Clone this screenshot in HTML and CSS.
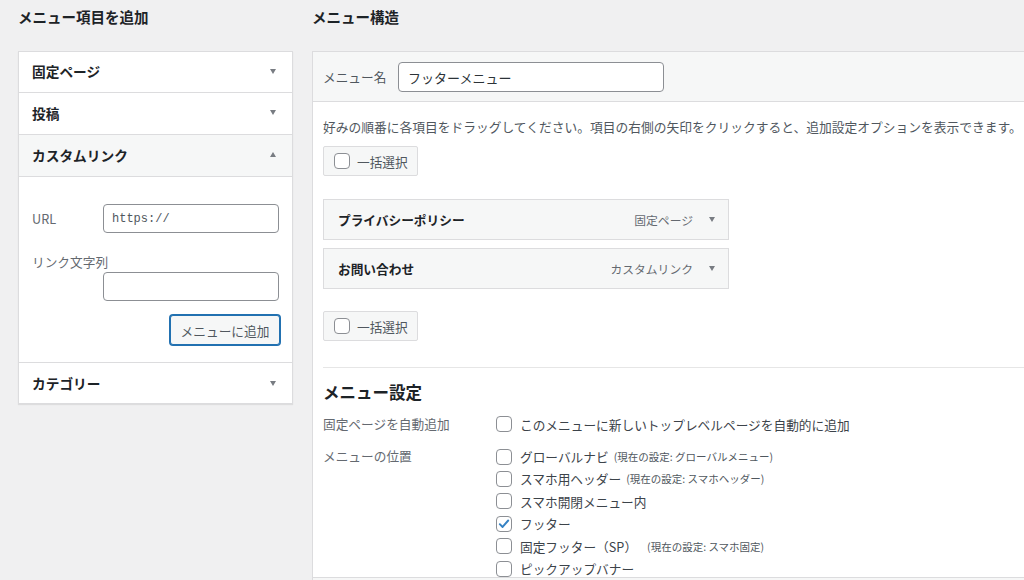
FILE: index.html
```html
<!DOCTYPE html>
<html lang="ja">
<head>
<meta charset="utf-8">
<title>メニュー</title>
<link rel="stylesheet" href="styles.css">
</head>
<body>
<div class="wrap">
  <div class="col-left">
    <h2 class="col-title">メニュー項目を追加</h2>
    <div class="acc">
      <div class="acc-head first"><span>固定ページ</span><i class="tri down"></i></div>
      <div class="acc-head"><span>投稿</span><i class="tri down"></i></div>
      <div class="acc-head open"><span>カスタムリンク</span><i class="tri up"></i></div>
      <div class="acc-body">
        <div class="field-row">
          <label class="fl">URL</label>
          <input class="txt mono" type="text" value="https://">
        </div>
        <div class="fl fl-block">リンク文字列</div>
        <div class="field-row">
          <span class="fl"></span>
          <input class="txt" type="text">
        </div>
        <div class="btn-row"><button class="btn">メニューに追加</button></div>
      </div>
      <div class="acc-head last"><span>カテゴリー</span><i class="tri down"></i></div>
    </div>
  </div>

  <div class="col-right">
    <h2 class="col-title">メニュー構造</h2>
    <div class="menu-panel">
      <div class="mp-head">
        <label class="mp-label">メニュー名</label>
        <input class="txt name" type="text" value="フッターメニュー">
      </div>
      <div class="mp-body">
        <p class="desc">好みの順番に各項目をドラッグしてください。項目の右側の矢印をクリックすると、追加設定オプションを表示できます。</p>
        <div class="bulk"><span class="cb"></span><span>一括選択</span></div>
        <div class="items">
          <div class="item"><span class="item-title">プライバシーポリシー</span><span class="item-type">固定ページ</span><i class="tri down"></i></div>
          <div class="item"><span class="item-title">お問い合わせ</span><span class="item-type">カスタムリンク</span><i class="tri down"></i></div>
        </div>
        <div class="bulk bulk2"><span class="cb"></span><span>一括選択</span></div>

        <div class="settings">
          <h3 class="set-title">メニュー設定</h3>
          <div class="set-row">
            <div class="set-label">固定ページを自動追加</div>
            <div class="set-opts">
              <div class="opt"><span class="cb"></span><span>このメニューに新しいトップレベルページを自動的に追加</span></div>
            </div>
          </div>
          <div class="set-row">
            <div class="set-label">メニューの位置</div>
            <div class="set-opts">
              <div class="opt"><span class="cb"></span><span>グローバルナビ</span><small class="cur">(現在の設定: グローバルメニュー)</small></div>
              <div class="opt"><span class="cb"></span><span>スマホ用ヘッダー</span><small class="cur">(現在の設定: スマホヘッダー)</small></div>
              <div class="opt"><span class="cb"></span><span>スマホ開閉メニュー内</span></div>
              <div class="opt"><span class="cb checked"><svg viewBox="0 0 16 16" width="14" height="14"><path d="M3.2 8.2 L6.4 11.4 L12.8 4" fill="none" stroke="#3582c4" stroke-width="2.2" stroke-linecap="round" stroke-linejoin="round"/></svg></span><span>フッター</span></div>
              <div class="opt"><span class="cb"></span><span>固定フッター（SP）</span><small class="cur cur2">(現在の設定: スマホ固定)</small></div>
              <div class="opt"><span class="cb"></span><span>ピックアップバナー</span></div>
            </div>
          </div>
        </div>
      </div>
      <div class="mp-foot"></div>
    </div>
  </div>
</div>
</body>
</html>
```

FILE: styles.css
```css
html, body {
  margin: 0;
  padding: 0;
  background: #f0f0f1;
  overflow: hidden;
  height: 580px;
}
body {
  font-family: "Noto Sans CJK JP", "Noto Sans", sans-serif;
  color: #3c434a;
  font-size: 12.7px;
}
.wrap {
  display: flex;
  align-items: flex-start;
  padding-left: 18px;
}
.col-left {
  width: 275px;
  flex: none;
}
.col-right {
  width: 760px;
  flex: none;
  margin-left: 19px;
}
.col-title {
  margin: 0;
  padding-top: 7px;
  height: 44px;
  line-height: 20px;
  font-size: 14.5px;
  font-weight: 700;
  color: #1d2327;
}

/* accordion */
.acc {
  background: #fff;
  border: 1px solid #dcdcde;
  box-shadow: 0 1px 1px rgba(0,0,0,.08);
}
.acc-head {
  height: 42px;
  box-sizing: border-box;
  border-bottom: 1px solid #dcdcde;
  display: flex;
  align-items: center;
  justify-content: space-between;
  padding: 0 16px 2px 13px;
  font-size: 13.7px;
  font-weight: 700;
  color: #1d2327;
}
.acc-head.first { height: 41px; }
.acc-head.open { background: #f6f7f7; }
.acc-head.last { border-bottom: 0; height: 40px; padding-bottom: 0; }
.tri {
  display: block;
  width: 0;
  height: 0;
  border-left: 3.5px solid transparent;
  border-right: 3.5px solid transparent;
}
.tri.down { border-top: 5px solid #787c82; }
.tri.up { border-bottom: 5px solid #787c82; }

.acc-body {
  border-bottom: 1px solid #dcdcde;
  padding: 27px 13px 17px 13px;
}
.field-row {
  display: flex;
  align-items: center;
}
.fl {
  width: 71px;
  flex: none;
  color: #646970;
  font-size: 12.7px;
  line-height: 20px;
}
.fl-block {
  width: auto;
  margin-top: 19px;
}
.txt {
  box-sizing: border-box;
  height: 29px;
  border: 1px solid #8c8f94;
  border-radius: 4px;
  background: #fff;
  padding: 0 8px;
  font-family: "Noto Sans CJK JP", sans-serif;
  font-size: 13px;
  color: #2c3338;
  width: 177px;
  margin: 0;
}
.txt.mono {
  font-family: "Liberation Mono", monospace;
  font-size: 12px;
  color: #50575e;
}
.btn-row {
  display: flex;
  justify-content: flex-end;
  margin-top: 14px;
}
.btn {
  height: 30px;
  width: 110px;
  box-sizing: border-box;
  border: 1px solid #2271b1;
  box-shadow: 0 0 0 1px #2271b1;
  border-radius: 3px;
  background: #f6f7f7;
  color: #50575e;
  font-family: "Noto Sans CJK JP", sans-serif;
  font-size: 12.7px;
  padding: 0;
  margin-right: -1px;
}

/* right panel */
.menu-panel {
  background: #fff;
  border: 1px solid #dcdcde;
  border-right: 0;
}
.mp-head {
  background: #f6f7f7;
  border-bottom: 1px solid #dcdcde;
  height: 49px;
  display: flex;
  align-items: center;
  padding-left: 10px;
}
.mp-label {
  width: 75px;
  color: #50575e;
  font-size: 12.7px;
}
.txt.name {
  width: 266px;
  height: 30px;
  font-size: 13px;
  padding-left: 9px;
  margin-top: 1px;
}
.mp-body {
  padding: 15px 0 0 10px;
}
.desc {
  margin: 0;
  line-height: 20px;
  color: #50575e;
  font-size: 12.75px;
  white-space: nowrap;
}
.cb {
  box-sizing: border-box;
  width: 16px;
  height: 16px;
  border: 1px solid #8c8f94;
  border-radius: 4px;
  background: #fff;
  flex: none;
  display: inline-flex;
  align-items: center;
  justify-content: center;
}
.bulk {
  box-sizing: border-box;
  width: 95px;
  height: 30px;
  margin-top: 9px;
  background: #f6f7f7;
  border: 1px solid #dcdcde;
  border-radius: 2px;
  display: flex;
  align-items: center;
  gap: 7px;
  padding-left: 10px;
  color: #50575e;
}
.bulk2 { margin-top: 22px; }
.items {
  margin-top: 23px;
  display: flex;
  flex-direction: column;
  gap: 8px;
}
.item {
  box-sizing: border-box;
  width: 406px;
  height: 41px;
  background: #f6f7f7;
  border: 1px solid #dcdcde;
  display: flex;
  align-items: center;
  padding: 0 13px 0 14px;
}
.item-title {
  flex: 1;
  font-weight: 700;
  color: #1d2327;
  font-size: 12.7px;
}
.item-type {
  color: #646970;
  font-size: 11.8px;
  margin-right: 16px;
}

.settings {
  margin-top: 26px;
  border-top: 1px solid #e6e6e6;
  padding-top: 13px;
}
.set-title {
  margin: 0;
  font-size: 16.5px;
  line-height: 22px;
  font-weight: 700;
  color: #1d2327;
}
.set-row {
  display: flex;
  margin-top: 10px;
}
.set-label {
  width: 173px;
  flex: none;
  line-height: 22px;
  color: #646970;
}
.set-opts {
  display: flex;
  flex-direction: column;
}
.opt {
  height: 22.4px;
  display: flex;
  align-items: center;
  gap: 8px;
  color: #3c434a;
  white-space: nowrap;
}
.cur {
  font-size: 10.5px;
  color: #50575e;
  margin-left: -3px;
}
.cur2 { margin-left: 2px; }
.mp-foot {
  margin-top: -3px;
  height: 20px;
  background: #f6f7f7;
  border-top: 1px solid #dcdcde;
  position: relative;
}
```
